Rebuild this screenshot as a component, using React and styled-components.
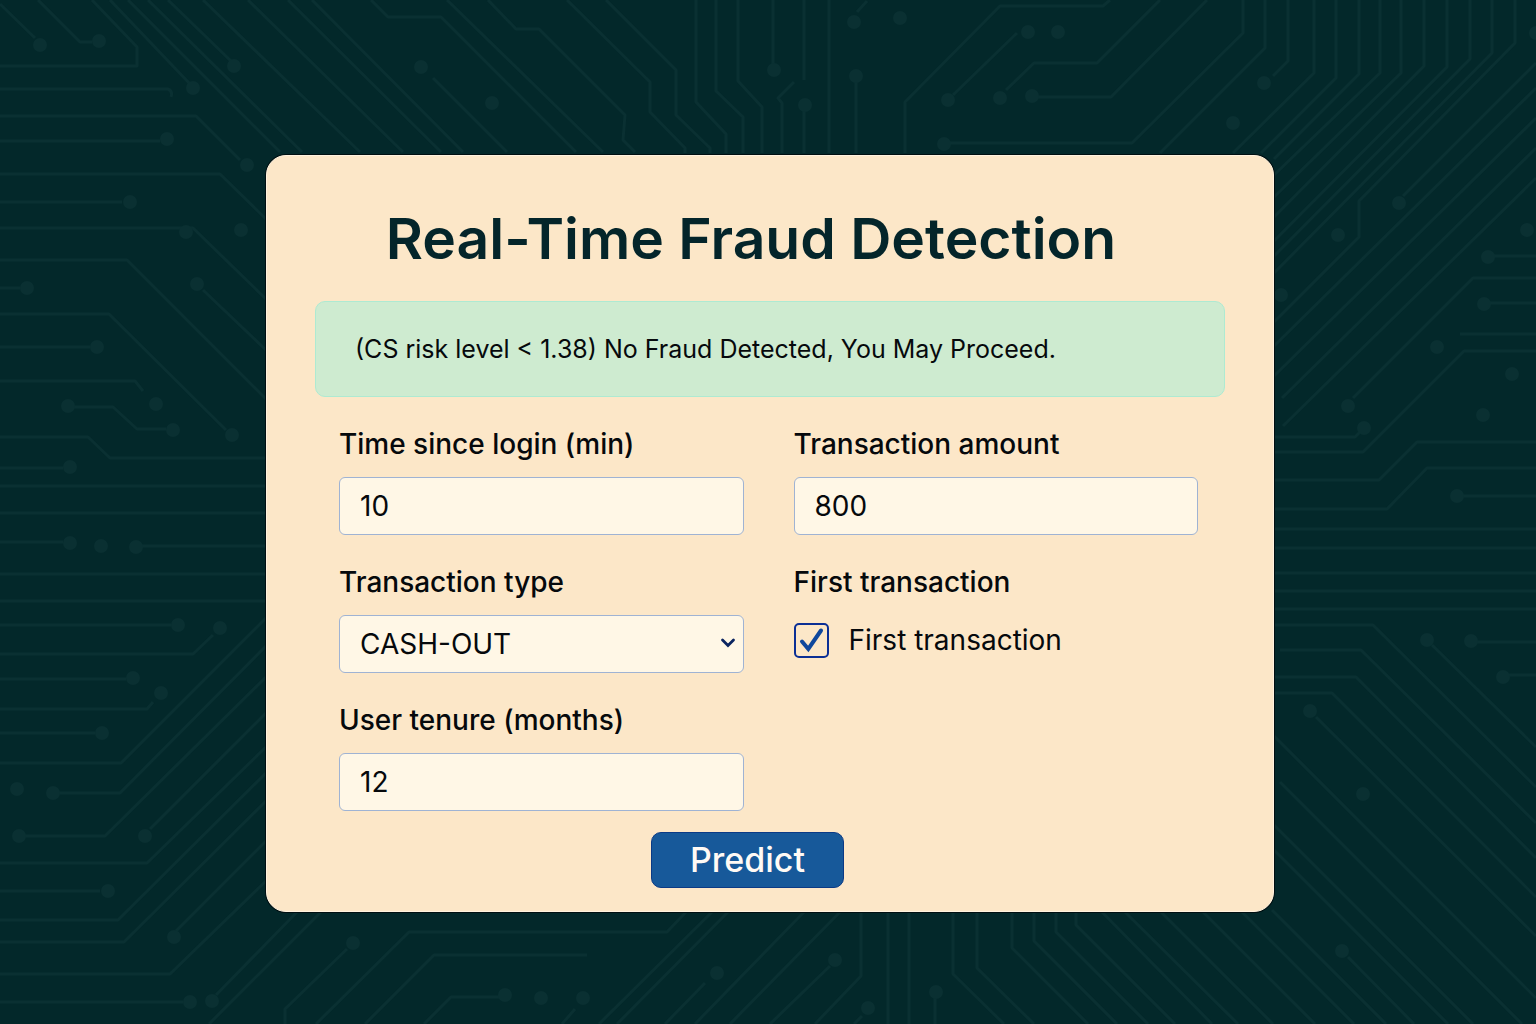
import React, { useId, useState } from 'react';
import styled, { createGlobalStyle } from 'styled-components';

const color = {
  page: '#03282a',
  trace: '#0a3032',
  card: '#fce7c8',
  cardEdge: '#fff3e0',
  ink: '#06090c',
  title: '#04252a',
  field: '#fff7e6',
  fieldBorder: '#9fb3d3',
  success: '#ceebd0',
  successBorder: '#aeead2',
  primary: '#17599a',
  primaryBorder: '#0b3a86',
  accent: '#0b2f95',
};

const GlobalStyle = createGlobalStyle`
  *, *::before, *::after {
    box-sizing: border-box;
  }

  body {
    margin: 0;
    background: ${color.page};
    color: ${color.ink};
    font-family: Inter, Roboto, "Liberation Sans", sans-serif;
  }
`;

const Page = styled.main`
  position: relative;
  display: flex;
  justify-content: center;
  align-items: flex-start;
  min-height: 100vh;
  padding: 155px 24px 112px 28px;
  overflow: hidden;
`;

const Backdrop = styled.svg`
  position: absolute;
  inset: 0;
  width: 100%;
  height: 100%;
`;

const Card = styled.section`
  position: relative;
  width: 100%;
  max-width: 1008px;
  padding: 48px 48px 23px;
  border: 1px solid ${color.cardEdge};
  border-radius: 20px;
  background: ${color.card};
  box-shadow: 0 0 0 1px #010f11;
`;

const Title = styled.h1`
  margin: 0 0 27px;
  padding-right: 38px;
  color: ${color.title};
  font-size: 57px;
  font-weight: 600;
  line-height: 70px;
  text-align: center;
`;

const Alert = styled.p`
  margin: 0 0 30px;
  padding: 31px 39px;
  border: 1px solid ${color.successBorder};
  border-radius: 10px;
  background: ${color.success};
  font-size: 25px;
  line-height: 32px;
`;

const Form = styled.form`
  padding: 0 27px 0 24px;
`;

const Fields = styled.div`
  display: grid;
  grid-template-columns: repeat(auto-fit, minmax(320px, 1fr));
  gap: 30px 50px;
`;

const Field = styled.div`
  display: flex;
  flex-direction: column;
  gap: 16px;
  min-width: 0;
`;

const Label = styled.label`
  font-size: 28px;
  font-weight: 500;
  line-height: 34px;
`;

const Group = styled.fieldset`
  display: flex;
  flex-direction: column;
  min-width: 0;
  margin: 0;
  padding: 0;
  border: 0;
`;

const Legend = styled.legend`
  margin-bottom: 16px;
  padding: 0;
  font-size: 28px;
  font-weight: 500;
  line-height: 34px;
`;

const Input = styled.input`
  width: 100%;
  height: 58px;
  padding: 0 20px;
  border: 1px solid ${color.fieldBorder};
  border-radius: 6px;
  background: ${color.field};
  color: inherit;
  font-family: inherit;
  font-size: 28px;
`;

const Select = styled(Input).attrs({ as: 'select' })`
  display: block;
  appearance: none;
`;

const SelectWrap = styled.div`
  position: relative;
`;

const Chevron = styled.svg`
  position: absolute;
  top: 22px;
  right: 8px;
  width: 16px;
  height: 12px;
  pointer-events: none;
`;

const CheckRow = styled.div`
  display: flex;
  align-items: center;
  gap: 20px;
  height: 50px;
`;

const CheckBox = styled.span`
  position: relative;
  width: 35px;
  height: 35px;
`;

const CheckInput = styled.input`
  display: block;
  width: 100%;
  height: 100%;
  margin: 0;
  border: 2px solid ${color.accent};
  border-radius: 5px;
  background: transparent;
  appearance: none;
`;

const CheckMark = styled.svg`
  position: absolute;
  inset: 0;
  width: 100%;
  height: 100%;
  pointer-events: none;
`;

const CheckLabel = styled.label`
  font-size: 28px;
  line-height: 34px;
`;

const Actions = styled.div`
  display: flex;
  justify-content: center;
  margin-top: 21px;
  padding-right: 42px;
`;

const Button = styled.button`
  height: 56px;
  padding: 0 38px;
  border: 1px solid ${color.primaryBorder};
  border-radius: 10px;
  background: ${color.primary};
  color: #fffaf5;
  font-family: inherit;
  font-size: 34px;
  font-weight: 500;
  line-height: 1;
  cursor: pointer;
`;

const traces = [
  // top left
  'M0 4L35 38', 'M38 0L80 42H92', 'M92 0L137 47V66H0', 'M0 89H168Q173 91 171 97', 'M110 0L190 84',
  'M128 0L280 152', 'M148 0L302 152', 'M168 0L231 61', 'M203 0L360 152', 'M248 0L403 152',
  'M288 0L441 152', 'M312 0L463 152', 'M371 0L388 17H441L576 152', 'M447 0L603 152',
  'M488 0L516 29H539L625 115L623 140L635 152', 'M433 78L507 152',
  // left side
  'M0 116H196L240 160', 'M0 141H160', 'M0 174H220L266 219', 'M0 202H122', 'M0 228H193L266 299',
  'M0 260H127L266 399', 'M0 288H20', 'M203 290L266 350', 'M0 314H109L226 430', 'M0 347H90',
  'M0 381H135L143 391', 'M68 407H113L137 429H166', 'M0 437H88L110 458H266', 'M0 468H63',
  'M0 486H266', 'M0 513H266', 'M0 542H63', 'M136 546H266', 'M0 574H266', 'M0 601H266',
  'M0 625H171', 'M0 654H193L213 635', 'M0 679H126', 'M0 709H147L153 702', 'M0 733H95',
  'M0 763H121L266 618', 'M53 793H120L266 646', 'M19 836H105L266 677', 'M150 829L266 713',
  'M0 863H147L266 747', 'M0 891H100', 'M0 920H118L266 773', 'M0 942H124L266 801',
  'M176 931L266 841', 'M0 974H170L266 881', 'M0 1002H183',
  // bottom
  'M216 995L297 912', 'M209 1024L321 912', 'M347 949L285 1009V1024', 'M316 1024L409 932H667L686 912',
  'M365 1024L434 955H587', 'M424 1024L451 997H500', 'M575 1009L562 1024', 'M599 1024L712 912',
  'M617 1024L728 912', 'M665 1024L705 983', 'M695 1024L804 912', 'M730 1024L840 912',
  'M770 1024L830 966', 'M815 1024L861 976V912', 'M862 1016L854 1024', 'M888 912V1024',
  'M909 912V1024', 'M935 992V1024', 'M953 912V974L1004 1024', 'M977 912V968L1034 1024',
  'M1012 912V948L1088 1024', 'M1034 912V941L1117 1024', 'M1056 912V932L1148 1024',
  'M1076 912V925L1175 1024', 'M1102 912L1212 1024', 'M1125 912L1238 1024', 'M1161 912L1273 1024',
  'M1203 912L1315 1024', 'M1242 912L1354 1024', 'M1272 910L1386 1024', 'M1348 957L1414 1024',
  // bottom right
  'M1274 850L1448 1024', 'M1274 825L1473 1024', 'M1280 782L1522 1024', 'M1274 736L1536 998',
  'M1316 717L1536 936', 'M1274 693H1332L1536 897', 'M1274 677H1356L1536 858',
  'M1280 650H1361L1536 823', 'M1274 625H1373L1536 787', 'M1432 645L1536 747', 'M1471 642H1536',
  'M1503 675H1536',
  // right side
  'M1274 437H1355L1360 432', 'M1274 452H1363L1464 351H1536', 'M1460 334H1536', 'M1484 303H1536',
  'M1274 480H1379L1417 442H1536', 'M1274 509H1387L1427 468H1536', 'M1457 496H1536',
  'M1274 529H1536', 'M1274 548H1536', 'M1274 573H1536', 'M1274 591H1536', 'M1274 609H1536',
  'M1353 398L1473 278H1536', 'M1536 88L1274 346', 'M1536 118L1274 376', 'M1536 148L1282 398',
  'M1536 178L1283 426', 'M1403 196L1536 63', 'M1488 256H1536',
  // top right
  'M905 153V102L1000 6H1103L1110 0', 'M1017 33L953 95', 'M1006 90L1034 63H1097L1160 0',
  'M1032 97H1111L1207 0', 'M944 143H1132L1243 33V0', 'M1160 153L1265 48V0', 'M1288 0V61L1273 76',
  'M1314 0V73L1233 153', 'M1336 0V78L1261 153', 'M1359 0V74L1274 159', 'M1380 0V73L1274 175',
  'M1401 0V73L1274 197', 'M1424 0V66L1274 217', 'M1447 0V67L1274 241', 'M1470 0V59L1274 256',
  'M1492 0V53L1274 273', 'M1515 0V43L1359 201V237L1274 322',
  // top centre
  'M567 0L650 82V112L685 148V153', 'M606 0L676 70V115L710 148V153', 'M696 0V102L726 134V153',
  'M716 0V91L743 117V153', 'M738 0V81L762 107V153', 'M773 0V65', 'M804 0V80',
  'M794 82L778 98L782 103V153', 'M804 105V153', 'M829 0V153', 'M857 12L867 1', 'M856 76V153',
];

const pads = [
  [40, 45], [99, 41], [193, 88], [234, 66], [421, 67], [492, 103], [247, 165], [167, 139],
  [130, 202], [186, 232], [241, 230], [27, 288], [197, 284], [232, 435], [97, 347], [156, 404],
  [68, 406], [173, 430], [70, 467], [70, 543], [101, 546], [136, 547], [178, 625], [220, 628],
  [133, 678], [161, 693], [102, 733], [53, 793], [17, 789], [19, 836], [145, 836], [108, 891],
  [174, 937], [190, 1002], [212, 1001], [353, 943], [505, 995], [541, 998], [583, 998],
  [717, 973], [835, 960], [868, 1008], [936, 992], [1342, 951], [1363, 794], [1310, 711],
  [1427, 640], [1471, 641], [1503, 677], [1281, 295], [1364, 428], [1484, 304], [1437, 347],
  [1512, 374], [1483, 415], [1457, 496], [1348, 406], [948, 100], [1028, 32], [1058, 32],
  [1000, 98], [1032, 96], [944, 144], [1264, 83], [1233, 123], [1399, 203], [1338, 235],
  [1527, 230], [1488, 257], [1536, 33], [774, 70], [805, 105], [854, 22], [900, 18], [856, 76],
];

function CircuitBackdrop() {
  return (
    <Backdrop viewBox="0 0 1536 1024" preserveAspectRatio="xMidYMid slice" aria-hidden="true">
      <path d={traces.join('')} fill="none" stroke={color.trace} strokeWidth="3" strokeLinejoin="round" />
      {pads.map(([x, y]) => (
        <circle key={`${x}-${y}`} cx={x} cy={y} r="7" fill={color.trace} />
      ))}
    </Backdrop>
  );
}

function NumberField({ label, value, onChange }) {
  const id = useId();
  return (
    <Field>
      <Label htmlFor={id}>{label}</Label>
      <Input id={id} type="text" inputMode="numeric" value={value} onChange={(e) => onChange(e.target.value)} />
    </Field>
  );
}

function SelectField({ label, value, options, onChange }) {
  const id = useId();
  return (
    <Field>
      <Label htmlFor={id}>{label}</Label>
      <SelectWrap>
        <Select id={id} value={value} onChange={(e) => onChange(e.target.value)}>
          {options.map((option) => (
            <option key={option}>{option}</option>
          ))}
        </Select>
        <Chevron viewBox="0 0 16 12" aria-hidden="true">
          <path d="M2.5 3L8 8.5L13.5 3" fill="none" stroke="#0b2560" strokeWidth="2.8" strokeLinecap="round" />
        </Chevron>
      </SelectWrap>
    </Field>
  );
}

function CheckField({ legend, label, checked, onChange }) {
  const id = useId();
  return (
    <Group>
      <Legend>{legend}</Legend>
      <CheckRow>
        <CheckBox>
          <CheckInput id={id} type="checkbox" checked={checked} onChange={(e) => onChange(e.target.checked)} />
          {checked && (
            <CheckMark viewBox="0 0 35 35" aria-hidden="true">
              <path
                d="M8 18.5L14.3 26L27 7.5"
                fill="none"
                stroke="#0f479c"
                strokeWidth="4"
                strokeLinecap="round"
              />
            </CheckMark>
          )}
        </CheckBox>
        <CheckLabel htmlFor={id}>{label}</CheckLabel>
      </CheckRow>
    </Group>
  );
}

export default function App() {
  const [minutes, setMinutes] = useState('10');
  const [amount, setAmount] = useState('800');
  const [type, setType] = useState('CASH-OUT');
  const [first, setFirst] = useState(true);
  const [tenure, setTenure] = useState('12');

  return (
    <>
      <GlobalStyle />
      <Page>
        <CircuitBackdrop />
        <Card>
          <Title>Real-Time Fraud Detection</Title>
          <Alert role="status">(CS risk level &lt; 1.38) No Fraud Detected, You May Proceed.</Alert>
          <Form onSubmit={(e) => e.preventDefault()}>
            <Fields>
              <NumberField label="Time since login (min)" value={minutes} onChange={setMinutes} />
              <NumberField label="Transaction amount" value={amount} onChange={setAmount} />
              <SelectField label="Transaction type" value={type} options={['CASH-OUT']} onChange={setType} />
              <CheckField
                legend="First transaction"
                label="First transaction"
                checked={first}
                onChange={setFirst}
              />
              <NumberField label="User tenure (months)" value={tenure} onChange={setTenure} />
            </Fields>
            <Actions>
              <Button type="submit">Predict</Button>
            </Actions>
          </Form>
        </Card>
      </Page>
    </>
  );
}
